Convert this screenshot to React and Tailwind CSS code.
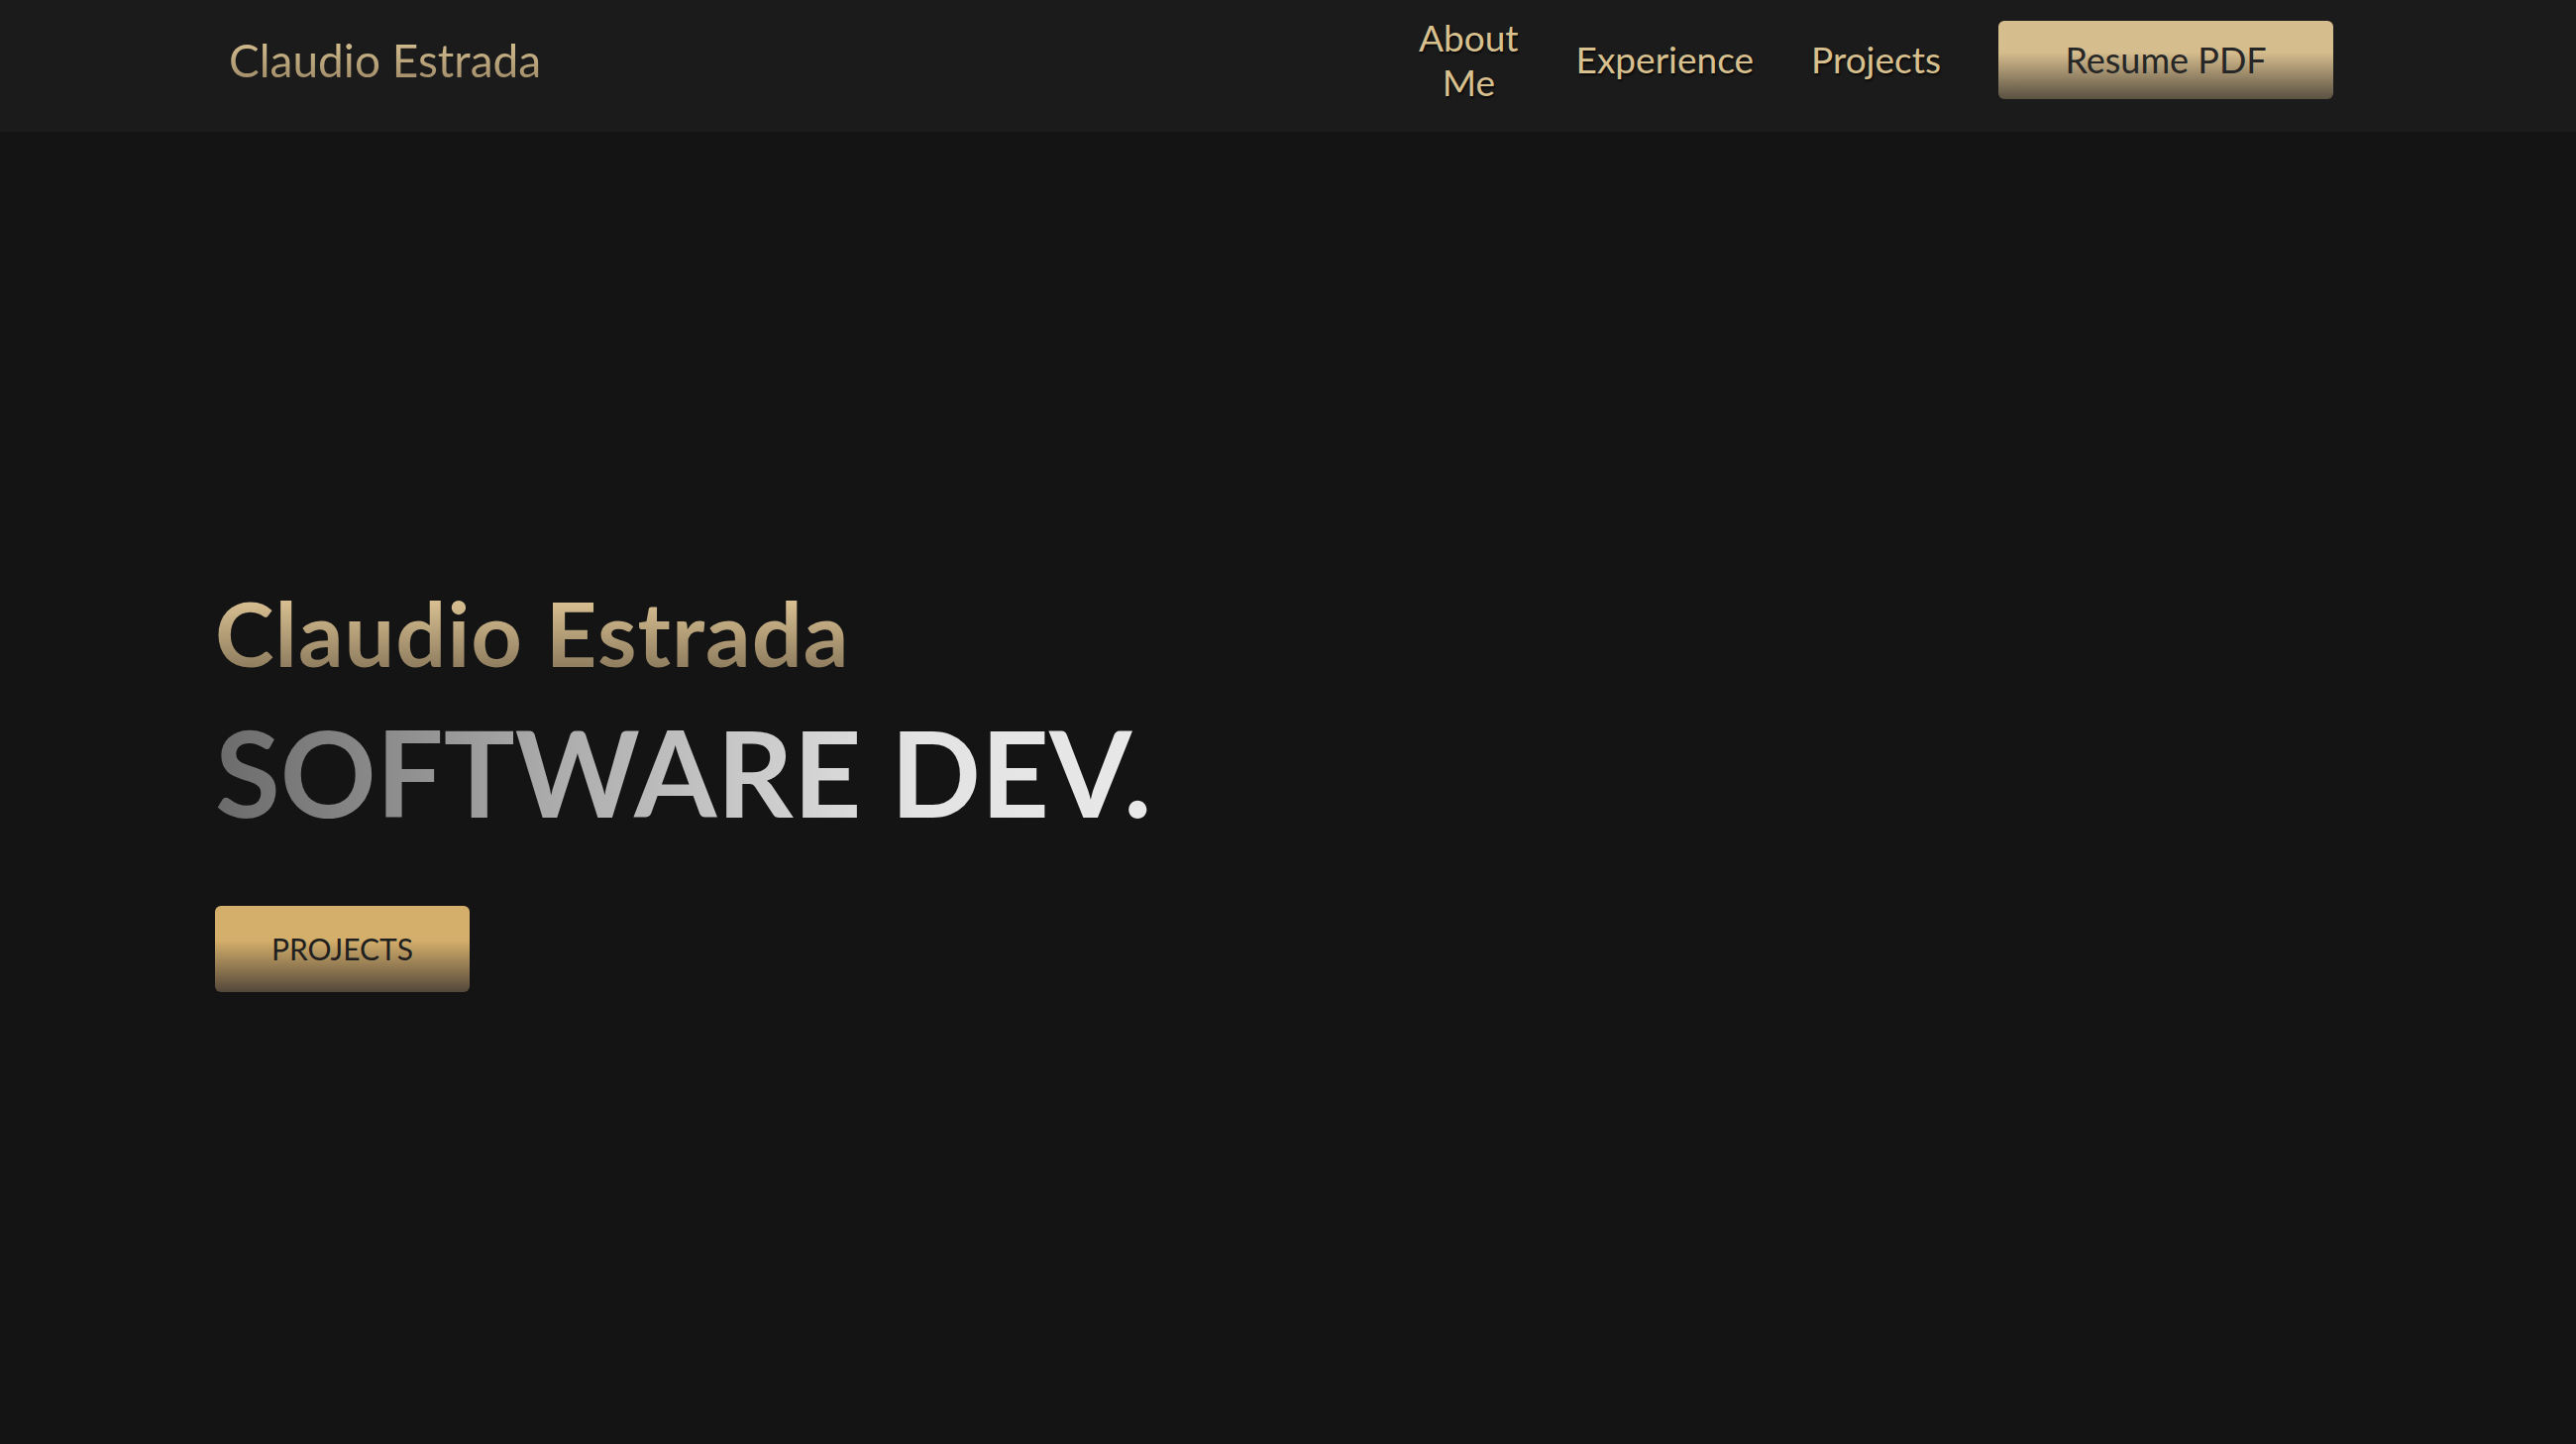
import React from "react";

export default function App() {
  const font = { fontFamily: "Lato, 'Open Sans', sans-serif" };
  return (
    <div className="min-h-screen h-[1457px] bg-[#141414] flex flex-col" style={font}>
      <header className="h-[133px] shrink-0 bg-[#1b1b1b] flex items-center pb-[12px] pl-[231px] pr-[245px]">
        <div className="text-[46px] leading-none bg-[linear-gradient(to_bottom,#d8c192,#9e8a67)] bg-clip-text text-transparent">
          Claudio Estrada
        </div>
        <nav className="ml-auto flex items-center gap-[58px] text-[37px] leading-[1.2] text-[#d8c08f] [text-shadow:1px_2px_2px_rgba(0,0,0,0.7)]">
          <a className="w-min text-center">About Me</a>
          <a>Experience</a>
          <a>Projects</a>
          <button className="w-[338px] h-[79px] rounded-[6px] bg-[linear-gradient(to_bottom,#d6bd8e_40%,#5a5142)] text-[#262626] text-[36px] [text-shadow:none] flex items-center justify-center">
            Resume PDF
          </button>
        </nav>
      </header>
      <main className="flex-1 flex flex-col justify-center pl-[217px] pb-[2px]">
        <h1 className="text-[90px] font-bold tracking-[1px] leading-[1.15] bg-[linear-gradient(to_bottom,#dcc394_15%,#7c6c52)] bg-clip-text text-transparent w-fit">
          Claudio Estrada
        </h1>
        <h2 className="mt-[19px] text-[120px] font-bold leading-[1.15] bg-[linear-gradient(to_right,#6b6b6b,#aaaaaa_35%,#e3e3e3_75%,#e8e8e8)] bg-clip-text text-transparent w-fit">
          SOFTWARE DEV.
        </h2>
        <div className="mt-[66px]">
          <button className="w-[257px] h-[87px] rounded-[6px] bg-[linear-gradient(to_bottom,#d4af6b_40%,#54473a)] text-[#1f1f1f] text-[30px] flex items-center justify-center">
            PROJECTS
          </button>
        </div>
      </main>
    </div>
  );
}
